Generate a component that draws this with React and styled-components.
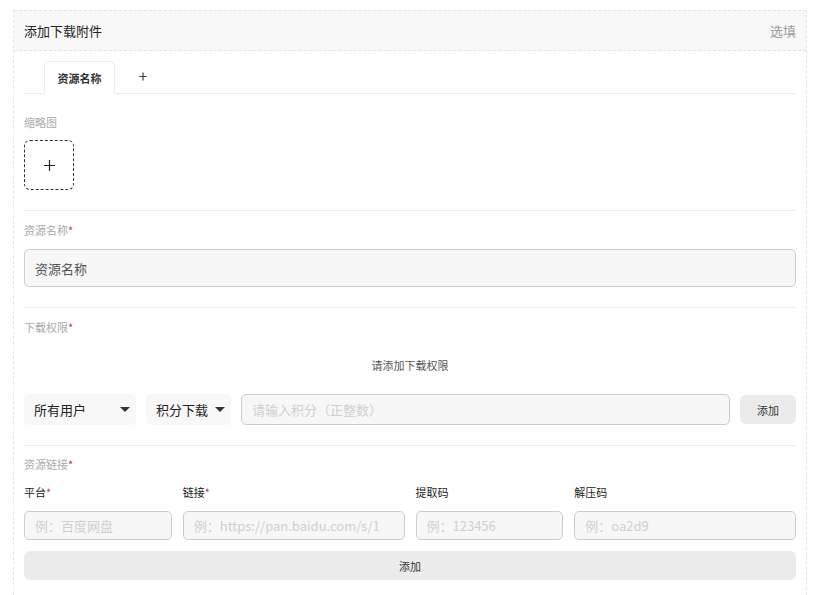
import React from 'react';
import styled, { createGlobalStyle } from 'styled-components';

const Global = createGlobalStyle`
  body {
    margin: 0;
    background: #fff;
    font-family: "Noto Sans CJK SC", "Noto Sans", sans-serif;
    color: #222;
  }
  * { box-sizing: border-box; }
  input { font-family: inherit; }
`

const Page = styled.div`
  padding: 10px 20px 0 13px;
  height: 595px;
  overflow: hidden;
`
const Panel = styled.div`
  border-left: 1px dashed #e6e6e6;
  border-right: 1px dashed #e6e6e6;
  height: 100%;
`
const Header = styled.div`
  height: 41px;
  background: #f8f8f8;
  border-top: 1px dashed #e3e3e3;
  border-bottom: 1px dashed #e3e3e3;
  display: flex;
  align-items: center;
  justify-content: space-between;
  padding: 0 10px 0 10px;
`
const Title = styled.div`
  font-size: 13px;
  color: #222;
`
const Optional = styled.div`
  font-size: 13px;
  color: #999;
`
const Body = styled.div`
  padding: 0 10px 0 10px;
`
const Tabs = styled.div`
  display: flex;
  align-items: flex-end;
  padding: 10px 0 0 20px;
  border-bottom: 1px solid #ececec;
  height: 43px;
`
const Tab = styled.div`
  width: 71px;
  height: 33px;
  margin-bottom: -1px;
  border: 1px solid #ececec;
  border-bottom-color: #fff;
  border-radius: 5px 5px 0 0;
  background: #fff;
  display: flex;
  align-items: center;
  justify-content: center;
  font-size: 11px;
  font-weight: 700;
  color: #333;
`
const AddTab = styled.div`
  width: 56px;
  height: 33px;
  display: flex;
  align-items: center;
  justify-content: center;
  font-size: 16px;
  color: #444;
  padding-bottom: 4px;
`
const Section = styled.div`
  padding: ${p => p.$pad || '20px 0 20px'};
  border-bottom: ${p => (p.$last ? 'none' : '1px solid #ececec')};
`
const Label = styled.div`
  font-size: 11px;
  color: #aaa;
  line-height: 16px;
  margin-bottom: ${p => p.$mb || 10}px;
`
const Star = styled.span`
  color: #d6285a;
`
const Upload = styled.div`
  width: 50px;
  height: 50px;
  border: 1px dashed #333;
  border-radius: 6px;
  display: flex;
  align-items: center;
  justify-content: center;
`
const TextInput = styled.input`
  width: 100%;
  height: ${p => p.$h || 38}px;
  background: #f7f7f7;
  border: 1px solid #cdcdcd;
  border-radius: 5px;
  padding: 0 10px;
  font-size: ${p => p.$fs || 13}px;
  color: #444;
  outline: none;
  &::placeholder { color: ${p => p.$ph || '#555'}; }
`
const Hint = styled.div`
  text-align: center;
  font-size: 11px;
  color: #555;
  margin: 22px 0 21px;
`
const PermRow = styled.div`
  display: flex;
  align-items: center;
  gap: 10px;
`
const Select = styled.div`
  width: ${p => p.$w}px;
  height: 31px;
  background: #f8f8f8;
  border-radius: 5px;
  display: flex;
  align-items: center;
  justify-content: space-between;
  padding: 0 6px 0 10px;
  font-size: 13px;
  color: #222;
  flex-shrink: 0;
`
const Caret = styled.span`
  width: 0;
  height: 0;
  border-left: 5px solid transparent;
  border-right: 5px solid transparent;
  border-top: 5px solid #333;
`
const SmallButton = styled.button`
  width: 56px;
  height: 29px;
  border: none;
  border-radius: 6px;
  background: #ebebeb;
  font-family: inherit;
  font-size: 11px;
  color: #333;
  flex-shrink: 0;
`
const LinkGrid = styled.div`
  display: grid;
  grid-template-columns: 2fr 3fr 2fr 3fr;
  column-gap: 11px;
  row-gap: 11px;
`
const ColLabel = styled.div`
  font-size: 11px;
  color: #222;
  line-height: 16px;
`
const WideButton = styled.button`
  width: 100%;
  height: 29px;
  margin-top: 11px;
  border: none;
  border-radius: 6px;
  background: #ebebeb;
  font-family: inherit;
  font-size: 11px;
  color: #333;
`

export default function App() {
  return (
    <Page>
      <Global />
      <Panel>
        <Header>
          <Title>添加下载附件</Title>
          <Optional>选填</Optional>
        </Header>
        <Body>
          <Tabs>
            <Tab>资源名称</Tab>
            <AddTab>+</AddTab>
          </Tabs>
          <Section $pad="20px 0 20px">
            <Label $mb={10}>缩略图</Label>
            <Upload>
              <svg width="11" height="11" viewBox="0 0 11 11">
                <path d="M5.5 0v11M0 5.5h11" stroke="#222" strokeWidth="1.2" />
              </svg>
            </Upload>
          </Section>
          <Section $pad="11px 0 20px">
            <Label $mb={11}>资源名称<Star>*</Star></Label>
            <TextInput placeholder="资源名称" />
          </Section>
          <Section $pad="11px 0 20px">
            <Label $mb={0}>下载权限<Star>*</Star></Label>
            <Hint>请添加下载权限</Hint>
            <PermRow>
              <Select $w={112}>所有用户<Caret /></Select>
              <Select $w={85}>积分下载<Caret /></Select>
              <TextInput $h={31} $ph="#cfcfcf" placeholder="请输入积分（正整数）" />
              <SmallButton>添加</SmallButton>
            </PermRow>
          </Section>
          <Section $pad="10px 0 0" $last>
            <Label $mb={12}>资源链接<Star>*</Star></Label>
            <LinkGrid>
              <ColLabel>平台<Star>*</Star></ColLabel>
              <ColLabel>链接<Star>*</Star></ColLabel>
              <ColLabel>提取码</ColLabel>
              <ColLabel>解压码</ColLabel>
              <TextInput $h={29} $ph="#cfcfcf" placeholder="例：百度网盘" />
              <TextInput $h={29} $ph="#cfcfcf" placeholder="例：https://pan.baidu.com/s/1" />
              <TextInput $h={29} $ph="#cfcfcf" placeholder="例：123456" />
              <TextInput $h={29} $ph="#cfcfcf" placeholder="例：oa2d9" />
            </LinkGrid>
            <WideButton>添加</WideButton>
          </Section>
        </Body>
      </Panel>
    </Page>
  );
}
